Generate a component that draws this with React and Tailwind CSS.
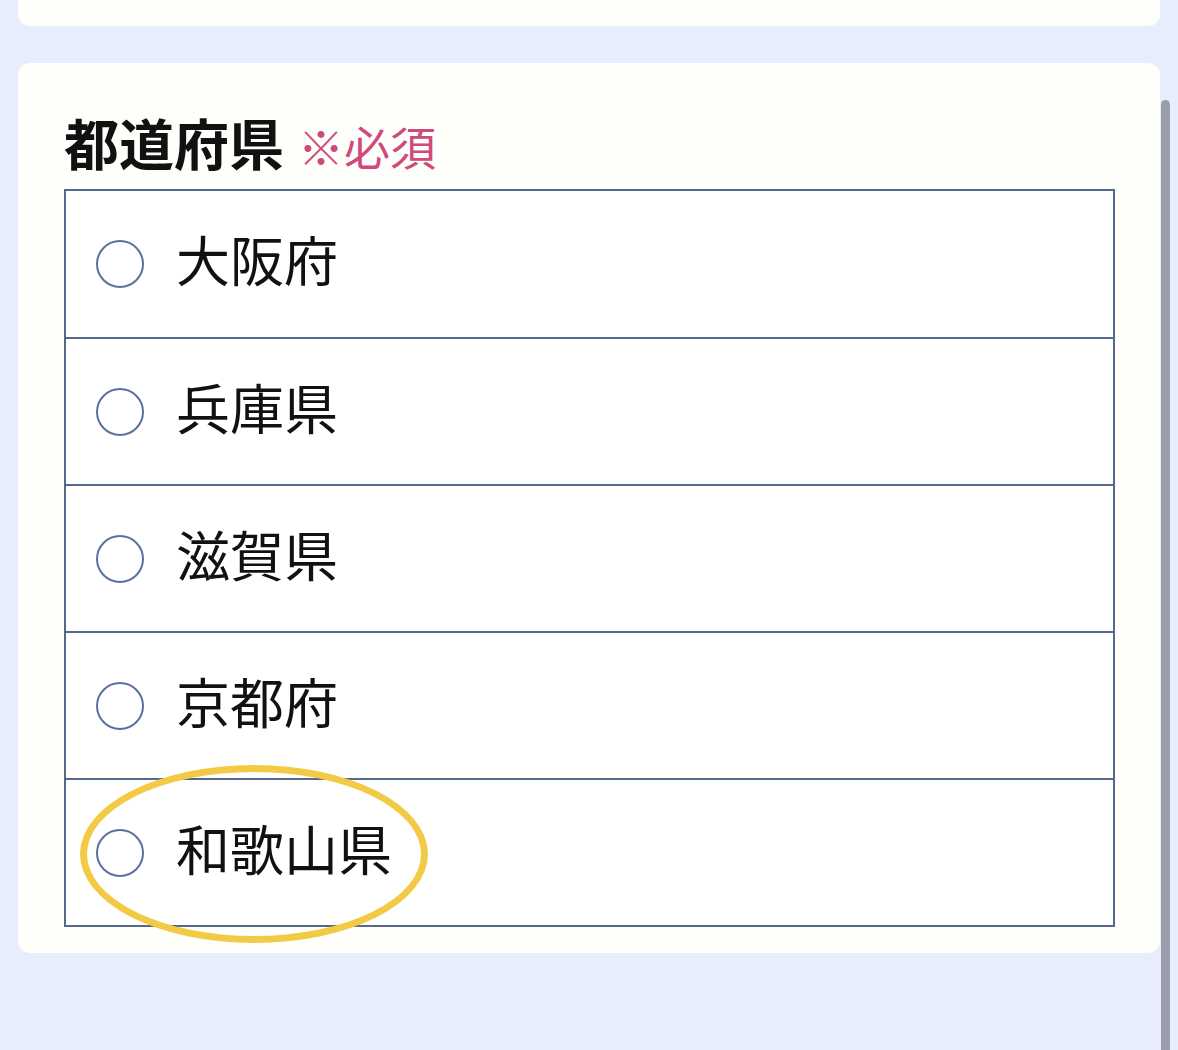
import React from 'react';

const prefectures = ['大阪府', '兵庫県', '滋賀県', '京都府', '和歌山県'];

const font = { fontFamily: '"Noto Sans CJK JP", "Noto Sans", sans-serif' };

const App = () => {
  return (
    <div className="relative min-h-screen h-[1050px] overflow-hidden bg-[#e7edfc] pl-[18px] pr-[18px]" style={font}>
      {/* Previous card (cut off) */}
      <div className="h-[26px] bg-[#fefefa] rounded-b-[12px]" />

      {/* Prefecture card */}
      <div className="relative mt-[37px] bg-[#fefefa] rounded-[12px] pt-[41px] pl-[46px] pr-[45px] pb-[26px]">
        <div className="flex items-baseline gap-[14px] h-[74px] mb-[11px] leading-[74px]">
          <span className="text-[55px] font-bold text-[#111]">都道府県</span>
          <span className="text-[46px] text-[#cf4a7a]">※必須</span>
        </div>

        <div className="border-2 border-[#55698f] bg-white">
          {prefectures.map((name, i) => (
            <label
              key={name}
              className={`flex items-center pl-[30px] gap-[32px] ${i > 0 ? 'h-[147px] border-t-2 border-[#55698f]' : 'h-[146px]'}`}
            >
              <span className="w-[48px] h-[48px] rounded-full border-[2.5px] border-[#5b70a0] bg-white shrink-0" />
              <span className="text-[54px] text-[#111] leading-none pb-[10px]">{name}</span>
            </label>
          ))}
        </div>

        {/* Highlight ellipse */}
        <div className="absolute left-[62px] top-[702px] w-[348px] h-[178px] rounded-[50%] border-[7px] border-[#f3ca46] pointer-events-none" />
      </div>

      {/* Scrollbar thumb */}
      <div className="absolute left-[1161px] top-[100px] w-[9px] h-[1000px] rounded-t-full bg-[#9b9dab]" />
    </div>
  );
};

export default App;
